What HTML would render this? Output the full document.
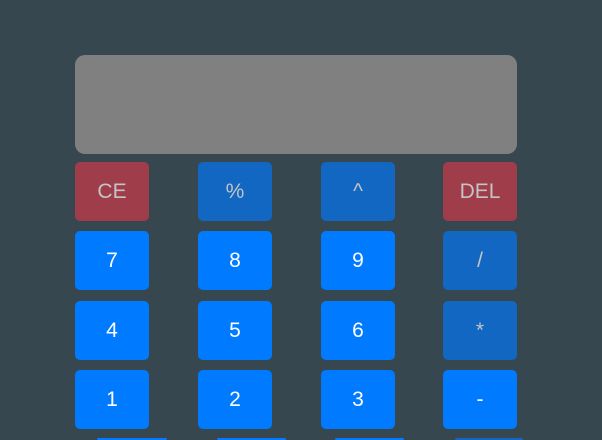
<!DOCTYPE html>
<html style="width:602px;height:440px;overflow:hidden"><head><style>
html,body{margin:0;width:602px;height:440px;overflow:hidden}
body{background:#37474f;position:relative;font-family:"Liberation Sans",sans-serif}
.d{position:absolute;left:75px;top:55px;width:442px;height:99px;background:#808080;border-radius:10px}
.b{position:absolute;width:74px;height:59px;border-radius:5px;color:#fff;font-size:21px;display:flex;align-items:center;justify-content:center;background:#007bff}
.r{background:#9f3d4a;color:#c4c4c4}
.k{background:#1167c2;color:#c4c4c4}
</style></head><body>
<div class="d"></div>
<div class="b r" style="left:75px;top:162px">CE</div>
<div class="b k" style="left:198px;top:162px">%</div>
<div class="b k" style="left:321px;top:162px">^</div>
<div class="b r" style="left:443px;top:162px">DEL</div>
<div class="b" style="left:75px;top:231px">7</div>
<div class="b" style="left:198px;top:231px">8</div>
<div class="b" style="left:321px;top:231px">9</div>
<div class="b k" style="left:443px;top:231px">/</div>
<div class="b" style="left:75px;top:301px">4</div>
<div class="b" style="left:198px;top:301px">5</div>
<div class="b" style="left:321px;top:301px">6</div>
<div class="b k" style="left:443px;top:301px">*</div>
<div class="b" style="left:75px;top:370px">1</div>
<div class="b" style="left:198px;top:370px">2</div>
<div class="b" style="left:321px;top:370px">3</div>
<div class="b" style="left:443px;top:370px">-</div>
<div class="b" style="left:97px;top:438px;width:70px;height:2px"></div>
<div class="b" style="left:217px;top:438px;width:69px;height:2px"></div>
<div class="b" style="left:335px;top:438px;width:69px;height:2px"></div>
<div class="b k" style="left:455px;top:438px;width:68px;height:2px"></div>
</body></html>
